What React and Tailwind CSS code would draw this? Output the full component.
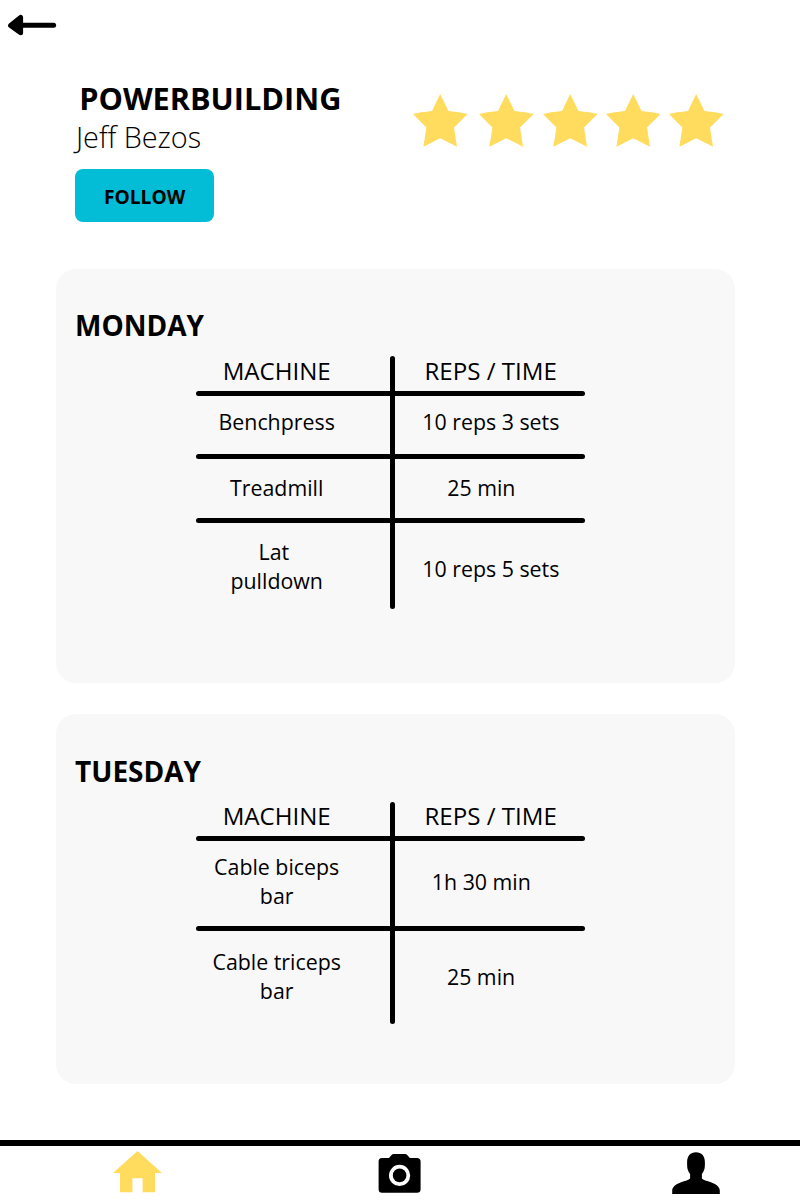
const stars = ['ml-0', 'ml-[11.5px]', 'ml-[9.7px]', 'ml-[8.5px]', 'ml-[8.4px]'];

const monday = [
  { machine: ['Benchpress'], reps: '10 reps 3 sets', row: 'h-[58.6px]', left: 'pb-[7px]', right: 'pb-[7px]' },
  { machine: ['Treadmill'], reps: '25 min', row: 'h-[58.7px]', left: 'pb-[2px]', right: 'pb-[2px] pr-[19px]' },
  { machine: ['Lat ', 'pulldown'], reps: '10 reps 5 sets', row: 'h-[86.5px]', left: '', right: 'pt-[5px]' },
];

const tuesday = [
  { machine: ['Cable biceps', 'bar'], reps: '1h 30 min', row: 'h-[84.5px]', left: 'pb-[4px]', right: 'pb-[3px] pr-[19px]' },
  { machine: ['Cable triceps', 'bar'], reps: '25 min', row: 'h-[93.6px]', left: 'pb-[2px]', right: 'pb-[1px] pr-[19.6px]' },
];

function BackArrow() {
  return (
    <svg className="block h-[50px] w-[80px] shrink-0" viewBox="0 0 80 50">
      <path d="M10.6 25.4 20.6 17.4V32.8Z" stroke="#000" strokeWidth="5" strokeLinejoin="round" />
      <path d="M20 25.3H53.6" stroke="#000" strokeWidth="5" strokeLinecap="round" />
    </svg>
  );
}

function Star({ className }) {
  return (
    <svg className={`h-[53px] w-[54.5px] shrink-0 ${className}`} viewBox="0 0 54.5 53">
      <path
        d="M27.2 0 35.5 17Q47.5 18.2 54.5 20L41 33.5 44 52.8 27.2 44.2 10.4 52.8 13.4 33.5 0 20Q7 18.2 19 17Z"
        fill="#ffdb5e"
      />
    </svg>
  );
}

function Cell({ width, pad, children }) {
  return <div className={`flex shrink-0 flex-col items-center justify-center ${width} ${pad}`}>{children}</div>;
}

function Rule() {
  return <div className="h-[5px] w-[389px] rounded-full bg-black" />;
}

function Schedule({ rows, head }) {
  return (
    <div className="relative ml-[139.7px] w-[389px] text-[21.35px] leading-[29px]">
      <div className={`flex text-[24.1px] ${head}`}>
        <div className="w-[162px] shrink-0 text-center">MACHINE</div>
        <div className="ml-[37.2px] w-[191.5px] shrink-0 text-center">REPS / TIME</div>
      </div>
      {rows.map((r) => (
        <div key={r.machine[0]}>
          <Rule />
          <div className={`flex ${r.row}`}>
            <Cell width="w-[162px]" pad={r.left}>
              {r.machine.map((line) => (
                <span key={line} className="whitespace-pre">{line}</span>
              ))}
            </Cell>
            <Cell width="ml-[37.4px] w-[191.5px]" pad={r.right}>
              <span>{r.reps}</span>
            </Cell>
          </div>
        </div>
      ))}
      <div className="absolute inset-y-0 left-[194.3px] w-[5px] rounded-full bg-black" />
    </div>
  );
}

function DayCard({ title, rows, head, className }) {
  return (
    <section className={`ml-[56px] w-[679px] rounded-[20px] bg-[#f8f8f8] ${className}`}>
      <h2 className="ml-[19px] text-[28px] font-bold leading-[38px]">{title}</h2>
      <Schedule rows={rows} head={head} />
    </section>
  );
}

export default function App() {
  return (
    <main className="flex h-[1200px] w-[800px] flex-col overflow-hidden bg-white font-['Open_Sans',sans-serif] text-black">
      <BackArrow />

      <header className="flex h-[218.6px] shrink-0 pt-[28px]">
        <div className="w-[413px]">
          <h1 className="ml-[79.2px] text-[30.7px] font-bold leading-[40px]">POWERBUILDING</h1>
          <p className="ml-[76px] text-[28.8px] font-light leading-[38px]">Jeff Bezos</p>
          <button className="ml-[75px] mt-[13.4px] flex h-[53px] w-[138.7px] items-center justify-center rounded-[8px] bg-[#03bcd6] pl-[0.5px] pt-[2px] text-[19.2px] font-bold leading-[26px]">
            FOLLOW
          </button>
        </div>
        <div className="flex pt-[15.8px]">
          {stars.map((s) => (
            <Star key={s} className={s} />
          ))}
        </div>
      </header>

      <DayCard title="MONDAY" rows={monday} head="h-[34.8px] leading-[30px]" className="h-[414.6px] shrink-0 pt-[37.8px] [&_h2]:mb-[11.4px]" />
      <DayCard title="TUESDAY" rows={tuesday} head="h-[34.5px] leading-[27.5px]" className="mt-[30.7px] h-[370px] shrink-0 pt-[38.4px] [&_h2]:mb-[11.4px]" />

      <nav className="mt-[56.4px] flex h-[60px] shrink-0 border-t-[6px] border-black">
        <svg className="ml-[113px] mt-[4.5px] h-[42px] w-[49px]" viewBox="0 0 49 42">
          <path d="M24.5 0 49 22H42V41.3H29.6V27.2H19.4V41.3H7V22H0Z" fill="#ffdb5e" />
        </svg>
        <svg className="ml-[216px] mt-[8px] h-[39px] w-[43px]" viewBox="0 0 43 39">
          <path
            fillRule="evenodd"
            d="M3.9 4H10.9L13.6 1Q14.4 0 15.7 0H27.2Q28.4 0 29.2 1L31.9 4H38.9Q42.6 4 42.6 7.6V35.3Q42.6 38.8 38.9 38.8H4.1Q0.6 38.8 0.6 35.3V7.6Q0.6 4 3.9 4ZM21.6 10.8A10.6 10.6 0 1 0 21.6 32A10.6 10.6 0 1 0 21.6 10.8Z"
          />
          <circle cx="21.6" cy="21.4" r="6.8" />
        </svg>
        <svg className="ml-[250.8px] mt-[6px] h-[42px] w-[48px]" viewBox="0 0 48 42">
          <path d="M24 0.3C29.5 0.3 32.9 4 32.9 10V13C32.9 17.5 31.6 19.6 29.9 22V26.5C31 28 35 29 39 30.3C45 32.6 47.8 35.5 47.8 38.5V42H0.2V38.5C0.2 35.5 3 32.6 9 30.3C13 29 17 28 18.1 26.5V22C16.4 19.6 15.1 17.5 15.1 13V10C15.1 4 18.5 0.3 24 0.3Z" />
        </svg>
      </nav>
    </main>
  );
}
